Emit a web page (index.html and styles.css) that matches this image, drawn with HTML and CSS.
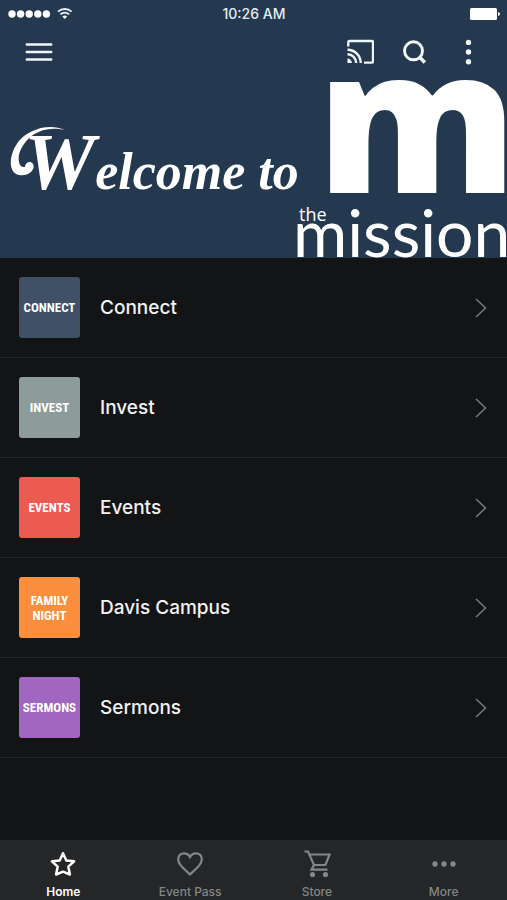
FILE: index.html
```html
<!DOCTYPE html>
<html lang="en">
<head>
<meta charset="utf-8">
<meta name="viewport" content="width=device-width, initial-scale=1">
<title>The Mission</title>
<link rel="stylesheet" href="styles.css">
</head>
<body>
<div class="app">
  <header class="hero">
    <div class="status">
      <svg class="signal" width="66" height="14" viewBox="0 0 66 14" aria-hidden="true">
        <g fill="#fff"><circle cx="4" cy="7" r="3.7"/><circle cx="12.6" cy="7" r="3.7"/><circle cx="21.2" cy="7" r="3.7"/><circle cx="29.8" cy="7" r="3.7"/><circle cx="38.4" cy="7" r="3.7"/></g>
        <g fill="none" stroke="#e8f1f8" stroke-width="1.9"><path d="M50 4.600a10.200 10.200 0 0 1 13.600 0"/><path d="M52.400 7.400a6.600 6.600 0 0 1 8.800 0"/></g>
        <path d="M54.400 9.500a3.700 3.700 0 0 1 4.800 0L56.800 12z" fill="#fff"/>
      </svg>
      <span class="time">10:26 AM</span>
      <svg class="battery" width="30" height="12" viewBox="0 0 30 12" aria-hidden="true"><rect width="27" height="12" rx="1.5" fill="#fff"/><path d="M28 4q2 .5 2 2t-2 2z" fill="#fff"/></svg>
    </div>
    <div class="toolbar">
      <button class="icon-btn" aria-label="Menu">
        <svg width="28" height="28" viewBox="0 0 28 28"><path d="M1.800 6.600h24.400M1.800 14h24.400M1.800 21.400h24.400" stroke="#eef6fb" stroke-width="2.500" stroke-linecap="round"/></svg>
      </button>
      <div class="actions">
        <button class="icon-btn" aria-label="Cast">
          <svg width="28" height="28" viewBox="0 0 28 28" fill="none" stroke="#eef6fb" stroke-width="2.400"><path d="M2.300 8.500V4.200q0-1.200 1.200-1.200h22.300q1.200 0 1.200 1.200v19.200q0 1.200-1.200 1.200H18"/><path d="M1.500 11.800A13.200 13.200 0 0 1 14.700 25M1.500 16.300A8.700 8.700 0 0 1 10.200 25"/><path d="M1.500 20.600A4.400 4.400 0 0 1 5.900 25H1.500z" fill="#eef6fb" stroke="none"/></svg>
        </button>
        <button class="icon-btn" aria-label="Search">
          <svg width="28" height="28" viewBox="0 0 28 28" fill="none" stroke="#f4f9fc" stroke-width="2.900"><circle cx="13.500" cy="12.800" r="9"/><path d="M19.500 19l5.300 5.400" stroke-width="3.500"/></svg>
        </button>
        <button class="icon-btn" aria-label="Options">
          <svg width="28" height="28" viewBox="0 0 28 28" fill="#f4f9fc"><circle cx="14.500" cy="4.400" r="2.700"/><circle cx="14.500" cy="14" r="2.700"/><circle cx="14.500" cy="23.800" r="2.700"/></svg>
        </button>
      </div>
    </div>
    <div class="banner">
      <h1 class="welcome">
        <svg class="swash" width="60" height="60" viewBox="0 0 60 60" aria-hidden="true"><path d="M56 5C43-1 27 2 15 11C0 23-3 48 10 50C20 52 27 44 24 39C21 35 16 38 16 42C9 43 8 32 12 24C19 10 34 0 56 5z" fill="#fff"/></svg>
        Welcome to
      </h1>
      <div class="logo">
        <span class="mark">m</span>
        <span class="the">the</span>
        <span class="name">mission</span>
      </div>
    </div>
  </header>

  <main class="list">
    <a class="row" href="#connect"><span class="tile blue">CONNECT</span><span class="label">Connect</span><svg class="chevron" width="14" height="22" viewBox="0 0 14 22"><path d="M2 2l9.500 9L2 20"/></svg></a>
    <a class="row" href="#invest"><span class="tile grey">INVEST</span><span class="label">Invest</span><svg class="chevron" width="14" height="22" viewBox="0 0 14 22"><path d="M2 2l9.500 9L2 20"/></svg></a>
    <a class="row" href="#events"><span class="tile red">EVENTS</span><span class="label">Events</span><svg class="chevron" width="14" height="22" viewBox="0 0 14 22"><path d="M2 2l9.500 9L2 20"/></svg></a>
    <a class="row" href="#davis"><span class="tile orange">FAMILY<br>NIGHT</span><span class="label">Davis Campus</span><svg class="chevron" width="14" height="22" viewBox="0 0 14 22"><path d="M2 2l9.500 9L2 20"/></svg></a>
    <a class="row" href="#sermons"><span class="tile purple">SERMONS</span><span class="label">Sermons</span><svg class="chevron" width="14" height="22" viewBox="0 0 14 22"><path d="M2 2l9.500 9L2 20"/></svg></a>
  </main>

  <nav class="tabs">
    <a class="tab active" href="#home"><svg width="28" height="28" viewBox="0 0 28 28"><path d="M14 3.200l3.300 7.200 7.800.9-5.800 5.300 1.600 7.900L14 21.700l-6.900 2.800 1.600-7.900-5.800-5.300 7.800-.9z" stroke-width="2.500" stroke-linejoin="round"/></svg>Home</a>
    <a class="tab" href="#pass"><svg width="28" height="28" viewBox="0 0 28 28"><path d="M14 24.500C6.500 17.500 2.200 14 2.200 9.200 2.200 5.600 4.800 3.300 8 3.300c2.600 0 4.800 1.400 6 3.800 1.200-2.400 3.400-3.800 6-3.800 3.200 0 5.800 2.300 5.800 5.900 0 4.800-4.300 8.300-11.800 15.300z" stroke-width="2.200"/></svg>Event Pass</a>
    <a class="tab" href="#store"><svg width="28" height="28" viewBox="0 0 28 28"><path d="M1.500 1.500h3.500l6 13.500h11.500L26.500 4.500H7M11 15l-2.500 4.600h16" stroke-width="2.200"/><circle class="solid" cx="9.500" cy="24.500" r="2.600"/><circle class="solid" cx="22.500" cy="24.500" r="2.600"/></svg>Store</a>
    <a class="tab" href="#more"><svg width="28" height="28" viewBox="0 0 28 28"><g class="solid"><circle cx="5" cy="14" r="2.700"/><circle cx="14" cy="14" r="2.700"/><circle cx="23" cy="14" r="2.700"/></g></svg>More</a>
  </nav>
</div>
</body>
</html>
```
FILE: styles.css
```css
* { box-sizing: border-box; }

body {
  margin: 0;
  background: #121416;
  color: #f2f2f2;
  font-family: Inter, "Liberation Sans", sans-serif;
}

a { color: inherit; text-decoration: none; }
svg { display: block; }

.app {
  min-height: 100vh;
  display: flex;
  flex-direction: column;
}

.hero {
  background: #24394f;
  overflow: hidden;
}

.status {
  display: grid;
  grid-template-columns: 1fr auto 1fr;
  align-items: center;
  height: 28px;
  padding: 0 7px 0 8px;
}

.time {
  font-size: 14px;
  line-height: 16px;
  font-weight: 500;
  color: #e3ecf3;
}

.battery { justify-self: end; }

.toolbar {
  display: flex;
  justify-content: space-between;
  align-items: center;
  height: 48px;
  padding: 0 25px;
}

.icon-btn {
  padding: 0;
  border: 0;
  background: none;
}

.actions {
  display: flex;
  gap: 26px;
}

.banner {
  display: flex;
  justify-content: space-between;
  height: 182px;
}

.welcome {
  position: relative;
  margin: 0;
  padding: 46px 0 0 24px;
  font: italic bold 52px/80px "Liberation Serif", serif;
  color: #fff;
  white-space: nowrap;
}

.welcome::first-letter { font-size: 80px; }

.swash {
  position: absolute;
  left: 9px;
  top: 49px;
}

.logo {
  display: flex;
  flex-direction: column;
  flex: none;
  width: 214px;
  margin-left: -20px;
  color: #fff;
}

.mark {
  height: 124px;
  padding-left: 24px;
  font: 800 200px/80px "Open Sans", sans-serif;
}

.the {
  height: 20px;
  padding-left: 6px;
  font: 18px/28px "Open Sans", sans-serif;
}

.name {
  font: 66px/24px Lato, "Open Sans", sans-serif;
}

.list { flex: 1; }

.row {
  display: flex;
  align-items: center;
  gap: 20px;
  height: 100px;
  padding: 0 19px;
  border-bottom: 1px solid #222426;
}

.tile {
  display: flex;
  align-items: center;
  justify-content: center;
  width: 61px;
  height: 61px;
  border-radius: 3px;
  font: bold 13px/15px "Roboto Condensed", "Liberation Sans Narrow", "Liberation Sans", sans-serif;
  text-align: center;
  color: #fff;
}

.blue { background: #405066; }
.grey { background: #8d9b9b; }
.red { background: #ec5b52; }
.orange { background: #fb8f3d; }
.purple { background: #a166bf; }

.label {
  flex: 1;
  font-size: 19px;
  line-height: 24px;
  font-weight: 500;
}

.chevron {
  fill: none;
  stroke: #777879;
  stroke-width: 1.6;
}

.tabs {
  display: grid;
  grid-template-columns: repeat(4, 1fr);
  height: 60px;
  padding-top: 10px;
  background: #242628;
}

.tab {
  display: flex;
  flex-direction: column;
  align-items: center;
  gap: 6px;
  font-size: 12px;
  line-height: 16px;
  font-weight: 500;
  color: #858687;
}

.tab svg {
  fill: none;
  stroke: currentColor;
}

.tab .solid {
  fill: currentColor;
  stroke: none;
}

.active {
  color: #fff;
  font-weight: 600;
}
```
